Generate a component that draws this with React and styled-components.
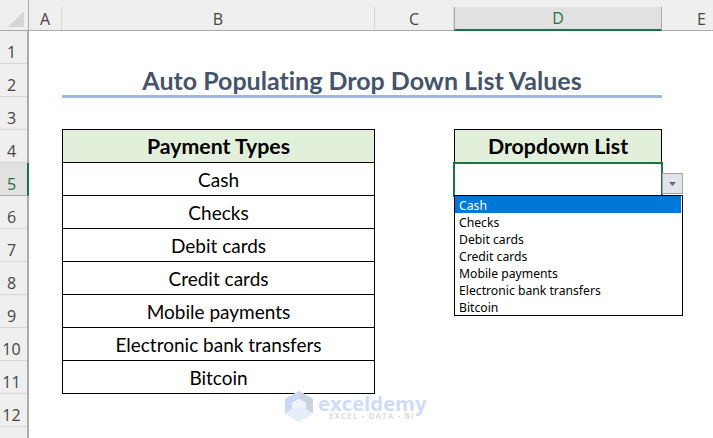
import React from 'react';
import styled, { createGlobalStyle } from 'styled-components';

const columns = [
  { name: 'A', width: 33 },
  { name: 'B', width: 313 },
  { name: 'C', width: 79 },
  { name: 'D', width: 208, active: true },
  { name: 'E', width: 80 },
];

const rowNumbers = [1, 2, 3, 4, 5, 6, 7, 8, 9, 10, 11, 12];

const paymentTypes = [
  'Cash',
  'Checks',
  'Debit cards',
  'Credit cards',
  'Mobile payments',
  'Electronic bank transfers',
  'Bitcoin',
];

export default function App() {
  return (
    <>
      <GlobalStyle />
      <Sheet>
        <ColumnBar>
          <Corner>
            <svg width="16" height="16" viewBox="0 0 16 16">
              <path d="M16 0V16H0Z" fill="#d6d6d6" />
            </svg>
          </Corner>
          {columns.map((col) => (
            <ColumnHead key={col.name} $width={col.width} $active={col.active}>
              {col.name}
            </ColumnHead>
          ))}
        </ColumnBar>
        <Body>
          <RowRail>
            {rowNumbers.map((n) => (
              <RowHead key={n} $active={n === 5}>
                {n}
              </RowHead>
            ))}
          </RowRail>
          <Canvas>
            <Title>Auto Populating Drop Down List Values</Title>
            <Tables>
              <PaymentTable>
                <HeadCell>Payment Types</HeadCell>
                {paymentTypes.map((item) => (
                  <Cell key={item}>{item}</Cell>
                ))}
              </PaymentTable>
              <DropdownColumn>
                <HeadCell>Dropdown List</HeadCell>
                <SelectedCell />
                <DropButton>
                  <svg width="7" height="4" viewBox="0 0 7 4">
                    <path d="M0 0H7L3.5 4Z" fill="#6a6a6a" />
                  </svg>
                </DropButton>
                <ListBox>
                  {paymentTypes.map((item, i) => (
                    <ListItem key={item} $selected={i === 0}>
                      {item}
                    </ListItem>
                  ))}
                </ListBox>
              </DropdownColumn>
            </Tables>
            <Watermark>
              <svg width="28" height="31" viewBox="0 0 28 31">
                <path d="M14 0L28 8V23L14 31L0 23V8Z" fill="#e6eff7" />
                <path d="M14 0L0 8V22L7 18V12L14 8Z" fill="#c9d8f7" />
                <path d="M14 0L28 8V22L21 18V12L14 8Z" fill="#cdd3dc" />
                <path d="M14 8L21 12V18L14 14L7 18V12Z" fill="#eef3f8" />
              </svg>
              <WatermarkText>
                <WatermarkName>exceldemy</WatermarkName>
                <WatermarkTag>EXCEL - DATA - BI</WatermarkTag>
              </WatermarkText>
            </Watermark>
          </Canvas>
        </Body>
      </Sheet>
    </>
  );
}

const GlobalStyle = createGlobalStyle`
  html, body {
    margin: 0;
    padding: 0;
    background: #fff;
    overflow: hidden;
  }
`;

const Sheet = styled.div`
  width: 713px;
  height: 438px;
  display: flex;
  flex-direction: column;
  overflow: hidden;
  font-family: Lato, "Liberation Sans", sans-serif;
  font-variant-ligatures: none;
  color: #000;
`;

const ColumnBar = styled.div`
  height: 31px;
  flex: none;
  display: flex;
  background: #efefef;
  border-bottom: 1px solid #ababab;
  box-sizing: border-box;
`;

const Corner = styled.div`
  width: 29px;
  flex: none;
  display: flex;
  align-items: flex-end;
  justify-content: flex-end;
  padding: 0 4px 3px 0;
  box-sizing: border-box;
  border-right: 1px solid #ababab;
`;

const ColumnHead = styled.div`
  width: ${(p) => p.$width}px;
  flex: none;
  box-sizing: border-box;
  margin-top: 7px;
  margin-bottom: ${(p) => (p.$active ? '-1px' : '0')};
  display: flex;
  align-items: center;
  justify-content: center;
  font-family: "Open Sans", sans-serif;
  font-size: 16px;
  color: ${(p) => (p.$active ? '#1f7246' : '#444')};
  background: ${(p) => (p.$active ? '#e1e1e1' : 'transparent')};
  border-right: 1px solid ${(p) => (p.$active ? '#ababab' : '#d6d6d6')};
  border-left: ${(p) => (p.$active ? '1px solid #ababab' : '0')};
  border-bottom: ${(p) => (p.$active ? '2px solid #1f7246' : '0')};
`;

const Body = styled.div`
  flex: 1;
  display: flex;
  min-height: 0;
`;

const RowRail = styled.div`
  width: 29px;
  flex: none;
  background: #efefef;
  border-right: 2px solid #ababab;
  box-sizing: border-box;
`;

const RowHead = styled.div`
  height: 33px;
  box-sizing: border-box;
  display: flex;
  align-items: center;
  justify-content: center;
  padding: 9px 4px 0 0;
  font-family: "Open Sans", sans-serif;
  font-size: 16px;
  color: ${(p) => (p.$active ? '#1f7246' : '#444')};
  background: ${(p) => (p.$active ? '#e1e1e1' : 'transparent')};
  border-bottom: 1px solid ${(p) => (p.$active ? '#ababab' : '#d6d6d6')};
  margin-right: ${(p) => (p.$active ? '-2px' : '0')};
  border-right: ${(p) => (p.$active ? '2px solid #1f7246' : '0')};
`;

const Canvas = styled.div`
  flex: 1;
  position: relative;
  padding-left: 33px;
  min-width: 0;
`;

const Title = styled.div`
  width: 600px;
  height: 67px;
  box-sizing: border-box;
  padding-top: 32px;
  border-bottom: 3px solid #a2b6dd;
  text-align: center;
  font-weight: 700;
  font-size: 25px;
  line-height: 34px;
  color: #44546a;
`;

const Tables = styled.div`
  display: flex;
  align-items: flex-start;
  gap: 79px;
  margin-top: 31px;
`;

const PaymentTable = styled.div`
  width: 313px;
  box-sizing: border-box;
  border-top: 1px solid #000;
  border-left: 1px solid #000;
  border-right: 1px solid #000;
`;

const Cell = styled.div`
  height: 33px;
  box-sizing: border-box;
  display: flex;
  align-items: center;
  justify-content: center;
  border-bottom: 1px solid #000;
  font-size: 19px;
`;

const HeadCell = styled(Cell)`
  background: #e2efda;
  font-weight: 700;
  font-size: 21.3px;
`;

const DropdownColumn = styled.div`
  width: 208px;
  position: relative;
  box-sizing: border-box;
  border-top: 1px solid #000;
  border-left: 1px solid #000;
  border-right: 1px solid #000;
`;

const SelectedCell = styled.div`
  position: absolute;
  left: -2px;
  right: -2px;
  top: 32px;
  height: 35px;
  box-sizing: border-box;
  border: 2px solid #1f7246;
`;

const DropButton = styled.div`
  position: absolute;
  left: 207px;
  top: 43px;
  width: 21px;
  height: 21px;
  box-sizing: border-box;
  background: #e1e4ec;
  border: 1px solid #a3a3a3;
  display: flex;
  align-items: center;
  justify-content: center;
`;

const ListBox = styled.div`
  position: absolute;
  left: -1px;
  top: 65px;
  width: 229px;
  box-sizing: border-box;
  border: 1px solid #000;
  background: #fff;
`;

const ListItem = styled.div`
  height: 17px;
  margin-right: 1px;
  padding-left: 4px;
  font-family: "Noto Sans", "DejaVu Sans", sans-serif;
  font-size: 12.2px;
  line-height: 19px;
  color: ${(p) => (p.$selected ? '#fff' : '#000')};
  background: ${(p) => (p.$selected ? '#0078d7' : 'transparent')};
`;

const Watermark = styled.div`
  position: absolute;
  left: 256px;
  top: 360px;
  display: flex;
  align-items: flex-start;
  gap: 5px;
`;

const WatermarkText = styled.div`
  display: flex;
  flex-direction: column;
  align-items: flex-start;
  padding-top: 3px;
`;

const WatermarkName = styled.div`
  font-family: "Open Sans", sans-serif;
  font-weight: 700;
  font-size: 20.3px;
  line-height: 18px;
  color: #cfdcf7;
`;

const WatermarkTag = styled.div`
  margin-left: 11px;
  font-family: "Open Sans", sans-serif;
  font-weight: 700;
  font-size: 8px;
  line-height: 8px;
  letter-spacing: 1.1px;
  color: #dcdcdc;
`;
